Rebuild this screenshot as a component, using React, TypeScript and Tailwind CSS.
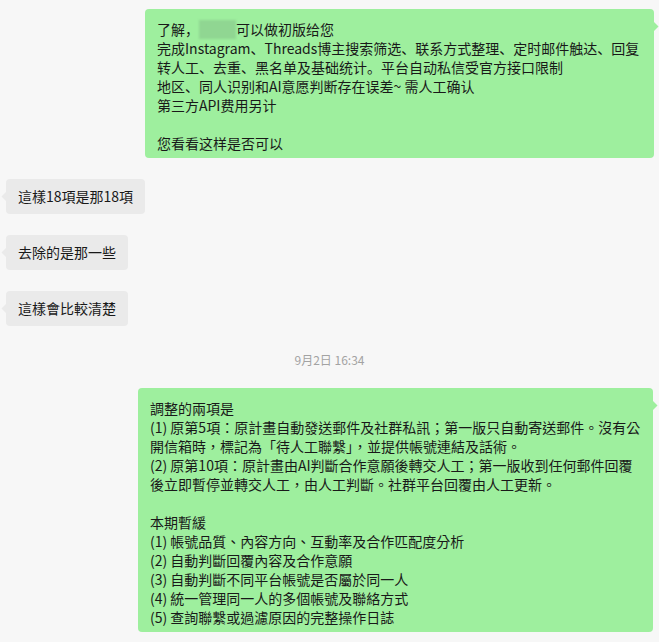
import React from "react";

const GREEN = "bg-[#9eef9e]";

function RightTail({ color }: { color: string }) {
  return (
    <svg
      className="absolute right-[-5px] top-[12px]"
      width="6"
      height="11"
      viewBox="0 0 6 11"
    >
      <path d="M0 0 L5.5 5.5 L0 11 Z" fill={color} />
    </svg>
  );
}

function LeftTail({ color }: { color: string }) {
  return (
    <svg
      className="absolute left-[-5px] top-[12px]"
      width="6"
      height="11"
      viewBox="0 0 6 11"
    >
      <path d="M6 0 L0.5 5.5 L6 11 Z" fill={color} />
    </svg>
  );
}

function LeftBubble({ text }: { text: string }) {
  return (
    <div className="flex pl-[6px]">
      <div className="relative rounded-[4px] bg-[#eaeaea] px-[12px] py-[8px] text-[14px] leading-[19px] text-[#191919] whitespace-nowrap">
        <LeftTail color="#eaeaea" />
        {text}
      </div>
    </div>
  );
}

export default function App() {
  const font = "font-['Noto_Sans_CJK_SC','Noto_Sans_CJK_TC',sans-serif]";
  const bubble2 = [
    "調整的兩項是",
    "(1) 原第5項：原計畫自動發送郵件及社群私訊；第一版只自動寄送郵件。沒有公",
    "開信箱時，標記為「待人工聯繫」，並提供帳號連結及話術。",
    "(2) 原第10項：原計畫由AI判斷合作意願後轉交人工；第一版收到任何郵件回覆",
    "後立即暫停並轉交人工，由人工判斷。社群平台回覆由人工更新。",
    "",
    "本期暫緩",
    "(1) 帳號品質、內容方向、互動率及合作匹配度分析",
    "(2) 自動判斷回覆內容及合作意願",
    "(3) 自動判斷不同平台帳號是否屬於同一人",
    "(4) 統一管理同一人的多個帳號及聯絡方式",
    "(5) 查詢聯繫或過濾原因的完整操作日誌",
  ];
  return (
    <div
      className={`w-full h-[642px] overflow-hidden bg-[#f7f7f7] ${font} text-[#191919]`}
    >
      <div className="flex justify-end pr-[5px] pt-[9px]">
        <div
          className={`relative w-[509px] rounded-[4px] ${GREEN} pl-[12px] pt-[11px] pb-[5px] text-[14px] leading-[19px] whitespace-nowrap`}
        >
          <RightTail color="#9eef9e" />
          <div className="flex items-center">
            <span>了解，</span>
            <span className="inline-block h-[19px] w-[37px] bg-[#90d692] blur-[1px]" />
            <span>可以做初版给您</span>
          </div>
          <div>完成Instagram、Threads博主搜索筛选、联系方式整理、定时邮件触达、回复</div>
          <div>转人工、去重、黑名单及基础统计。平台自动私信受官方接口限制</div>
          <div>地区、同人识别和AI意愿判断存在误差~ 需人工确认</div>
          <div>第三方API费用另计</div>
          <div className="h-[19px]" />
          <div>您看看这样是否可以</div>
        </div>
      </div>

      <div className="mt-[21px] flex flex-col gap-[21px]">
        <LeftBubble text="這樣18項是那18項" />
        <LeftBubble text="去除的是那一些" />
        <LeftBubble text="這樣會比較清楚" />
      </div>

      <div className="mt-[25px] text-center text-[12px] leading-[18px] text-[#a3a3a3]">
        9月2日 16:34
      </div>

      <div className="mt-[19px] flex justify-end pr-[6px]">
        <div
          className={`relative w-[515px] rounded-[4px] ${GREEN} pl-[12px] pt-[11px] pb-[5px] text-[14px] leading-[19px] whitespace-nowrap font-['Noto_Sans_CJK_TC','Noto_Sans_CJK_SC',sans-serif]`}
        >
          <RightTail color="#9eef9e" />
          {bubble2.map((l, i) =>
            l === "" ? <div key={i} className="h-[19px]" /> : <div key={i}>{l}</div>
          )}
        </div>
      </div>
    </div>
  );
}
